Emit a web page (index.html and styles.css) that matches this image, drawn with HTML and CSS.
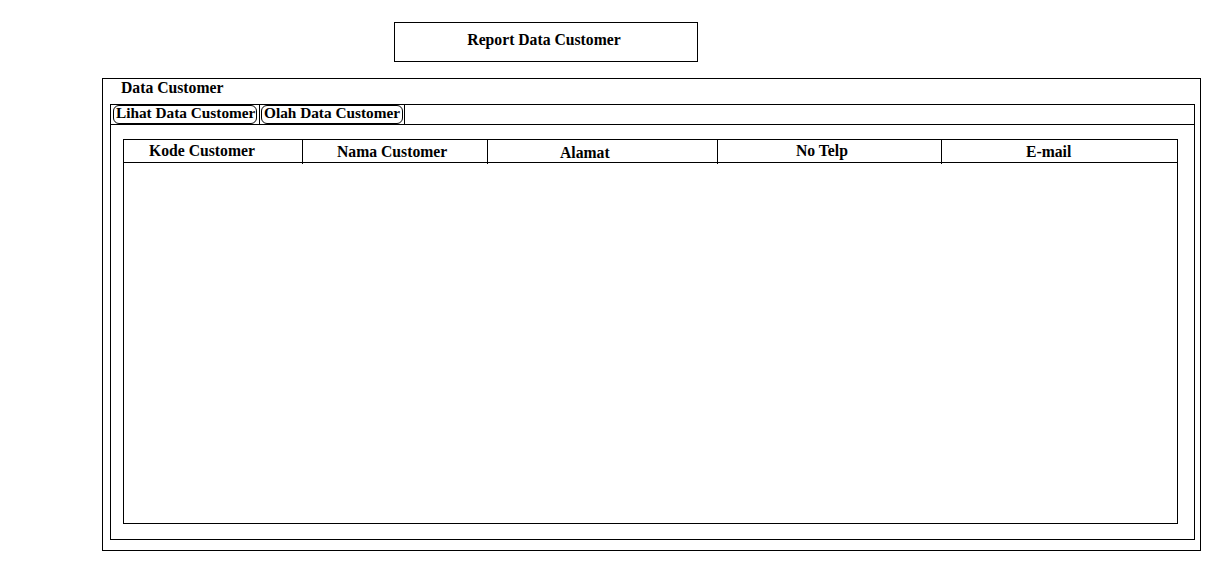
FILE: index.html
```html
<!DOCTYPE html>
<html>
<head>
<meta charset="utf-8">
<title>Report Data Customer</title>
<link rel="stylesheet" href="styles.css">
</head>
<body>
<div class="page">
  <div class="title">Report Data Customer</div>
  <div class="frame">
    <div class="frame-label">Data Customer</div>
    <div class="panel">
      <div class="tabstrip">
        <span class="tab tab-lihat">Lihat Data Customer</span>
        <span class="sep"></span>
        <span class="tab tab-olah">Olah Data Customer</span>
        <span class="sep"></span>
      </div>
      <div class="tab-body">
        <div class="grid">
          <div class="grid-head">
            <div class="cell c1">Kode Customer</div>
            <div class="cell c2">Nama Customer</div>
            <div class="cell c3">Alamat</div>
            <div class="cell c4">No Telp</div>
            <div class="cell c5">E-mail</div>
          </div>
          <div class="grid-body"></div>
        </div>
      </div>
    </div>
  </div>
</div>
</body>
</html>
```

FILE: styles.css
```css
* { box-sizing: border-box; }
html, body { margin: 0; padding: 0; background: #fff; }
body {
  font-family: "Liberation Serif", "Times New Roman", serif;
  font-weight: bold;
  font-size: 15.7px;
  color: #000;
}
.page {
  padding-top: 22px;
  display: flex;
  flex-direction: column;
}
.title {
  margin-left: 394px;
  width: 304px;
  height: 40px;
  border: 1px solid #000;
  display: flex;
  align-items: center;
  justify-content: center;
  padding-bottom: 5px;
  padding-right: 4px;
}
.frame {
  margin-top: 16px;
  margin-left: 102px;
  width: 1099px;
  height: 473px;
  border: 1px solid #000;
  display: flex;
  flex-direction: column;
}
.frame-label {
  height: 25px;
  padding-left: 18px;
  line-height: 18px;
}
.panel {
  margin-left: 7px;
  width: 1085px;
  height: 436px;
  border: 1px solid #000;
  display: flex;
  flex-direction: column;
}
.tabstrip {
  height: 20px;
  border-bottom: 1px solid #000;
  display: flex;
  align-items: stretch;
  padding-left: 2px;
}
.tab {
  height: 19px;
  border: 1px solid #000;
  border-radius: 6px;
  line-height: 14px;
  padding-left: 2px;
  font-size: 15.3px;
  white-space: nowrap;
  overflow: hidden;
}
.tab-lihat { width: 144px; }
.tab-olah { width: 142px; margin-left: 1px; }
.sep {
  width: 1px;
  background: #000;
  margin-left: 2px;
}
.tab-olah + .sep { margin-left: 1px; }
.tab-body {
  flex: 1;
  padding: 14px 16px 15px 12px;
  display: flex;
}
.grid {
  width: 1055px;
  height: 385px;
  border: 1px solid #000;
  display: flex;
  flex-direction: column;
}
.grid-head {
  display: grid;
  grid-template-columns: 179px 185px 230px 224px 235px;
  height: 23px;
  border-bottom: 1px solid #000;
}
.cell {
  line-height: 22px;
  white-space: nowrap;
  border-right: 1px solid #000;
}
.c1 { padding-left: 25px; }
.c2 { padding-left: 34px; padding-top: 1px; }
.c3 { padding-left: 72px; padding-top: 2px; }
.c4 { padding-left: 78px; }
.c5 { padding-left: 84px; padding-top: 1px; border-right: none; }
.grid-body { flex: 1; }
```
